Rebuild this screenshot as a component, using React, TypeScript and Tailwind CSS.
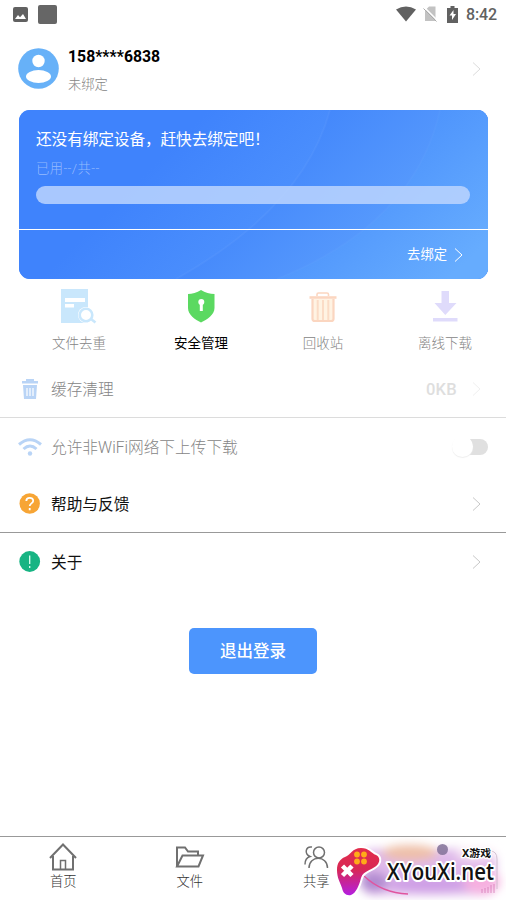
import type { ReactNode } from "react";

function Chevron({ className }: { className: string }) {
  return (
    <svg width="10" height="16" viewBox="0 0 10 16" fill="none" stroke="currentColor" className={className}>
      <path d="M1 1.5 8 8 1 14.5" />
    </svg>
  );
}

function StatusBar() {
  return (
    <div className="flex h-7 items-center justify-between pl-[13px] pr-[9px] text-[#616161]">
      <div className="flex items-center gap-[10px]">
        <svg width="15" height="15" viewBox="0 0 15 15">
          <rect width="15" height="15" rx="2" fill="currentColor" />
          <path d="M2 12 5 8l2 2.3L10 7l3 5z" fill="#fff" />
        </svg>
        <div className="h-[19px] w-[19px] rounded-[2px] bg-[#666]"></div>
      </div>
      <div className="flex items-center">
        <svg width="20" height="16" viewBox="0 0 20 16" className="mr-[7px]">
          <path d="M0 3.5Q10-2.5 20 3.5L10 15.5z" fill="currentColor" />
        </svg>
        <svg width="15" height="16" viewBox="0 0 15 16" className="mr-[9px]">
          <path d="M6 .5h6.5V15H2V4.5z" fill="#c2c2c2" />
          <path d="M2 2 14.5 14.5" stroke="#fff" strokeWidth="1.5" />
          <path d="M.5 2.5 13.5 15.5" stroke="#aaa" />
        </svg>
        <svg width="11" height="17" viewBox="0 0 11 17" className="mr-[8px]">
          <path d="M3.5 0h4v2H11v15H0V2h3.5z" fill="currentColor" />
          <path d="M6.5 4 2.5 9.5H5V14l4-6H6.5z" fill="#fff" />
        </svg>
        <span className="pt-px font-[Roboto,sans-serif] text-[16px] font-medium leading-none tracking-[-0.1px]">8:42</span>
      </div>
    </div>
  );
}

function Profile() {
  return (
    <div className="flex h-[82px] items-center pl-[18px] pr-[24px]">
      <svg width="41" height="41" viewBox="0 0 41 41" className="mr-[9px] -mt-[2px]">
        <circle cx="20.5" cy="20.5" r="20.3" fill="#67b1f8" />
        <circle cx="20.5" cy="13" r="6.2" fill="#fff" />
        <ellipse cx="20.5" cy="28.5" rx="12.5" ry="6.5" fill="#fff" />
      </svg>
      <div className="flex-1 pt-[2px]">
        <div className="h-[26px] text-[15.8px] font-bold leading-[23px] text-black">158****6838</div>
        <div className="mt-[3px] h-[22px] text-[13.3px] font-light leading-[22px] text-[#858585]">未绑定</div>
      </div>
      <Chevron className="text-[#dcdcdc]" />
    </div>
  );
}

function DeviceCard() {
  return (
    <div className="relative mx-[18px] ml-[19px] h-[169px] overflow-hidden rounded-[11px] bg-[#4083fb] text-white">
      {/* 卡片背景的弧形光带 */}
      <svg className="absolute inset-0" width="469" height="169" viewBox="0 0 469 169">
        <defs>
          <linearGradient id="band1" gradientUnits="userSpaceOnUse" x1="130" y1="60" x2="240" y2="170">
            <stop offset="0" stopColor="#3f83fc" />
            <stop offset="1" stopColor="#4f93fd" />
          </linearGradient>
          <linearGradient id="band2" gradientUnits="userSpaceOnUse" x1="250" y1="20" x2="370" y2="140">
            <stop offset="0" stopColor="#4084fb" />
            <stop offset="1" stopColor="#5a9dfd" />
          </linearGradient>
          <linearGradient id="band3" gradientUnits="userSpaceOnUse" x1="340" y1="30" x2="450" y2="150">
            <stop offset="0" stopColor="#498ffc" />
            <stop offset="1" stopColor="#66acfe" />
          </linearGradient>
        </defs>
        <path d="M0 0H469V169H0z" fill="url(#band1)" />
        <path d="M311 0Q285 97 157 169H469V0z" fill="url(#band2)" />
        <path d="M311 0Q285 97 157 169" fill="none" stroke="#fff" strokeOpacity=".035" strokeWidth="2" />
        <path d="M421 0Q396 113 258 169H469V0z" fill="url(#band3)" />
        <path d="M421 0Q396 113 258 169" fill="none" stroke="#fff" strokeOpacity=".02" strokeWidth="2" />
      </svg>
      <div className="relative flex h-full flex-col">
        <div className="h-[119px] px-[17px] pt-[18px]">
          <div className="h-[24px] text-[15.7px] leading-[24px] tracking-[-0.12px]">还没有绑定设备，赶快去绑定吧！</div>
          <div className="mt-[7px] h-5 text-[13.3px] font-light leading-5 tracking-[0.4px] text-white/45">已用--/共--</div>
          <div className="mt-[7px] mr-px h-[18px] rounded-full bg-[#bcd5fe]/85"></div>
        </div>
        <div className="flex flex-1 items-center justify-end border-t border-white pr-[24px]">
          <span className="pt-px text-[13.3px]">去绑定</span>
          <Chevron className="ml-[7px]" />
        </div>
      </div>
    </div>
  );
}

function Feature({ label, active, children }: { label: string; active?: boolean; children: ReactNode }) {
  return (
    <div className="flex flex-col items-center pt-[9px]">
      <svg width="36" height="36" viewBox="0 0 36 36">{children}</svg>
      <span className={active ? "mt-[9px] text-[13.5px] leading-5 text-black" : "mt-[9px] text-[13.5px] font-light leading-5 text-[#858585]"}>
        {label}
      </span>
    </div>
  );
}

function Features() {
  return (
    <div className="grid h-[82px] grid-cols-4 pl-[18px]">
      <Feature label="文件去重">
        <path d="M0 1h27v34H0z" fill="#c9e7fc" />
        <path d="M4 10h20v4H4zM4 16h9v3.5H4z" fill="#fff" />
        <circle cx="25" cy="27" r="8" fill="#fff" />
        <circle cx="25" cy="27" r="6.3" fill="#fff" stroke="#c9e7fc" strokeWidth="2.6" />
        <path d="m30 31 4.500 3.500" stroke="#c9e7fc" strokeWidth="2.600" />
      </Feature>
      <Feature label="安全管理" active>
        <path d="M18 2C14 4.500 9 6 5 6v14c0 7 7 11.500 13 14.500C24 31.500 31.500 27 31.500 20V6C27 6 22 4.500 18 2z" fill="#5bd961" />
        <circle cx="18.300" cy="14" r="3" fill="#fff" />
        <path d="M16.800 15h3v8h-3z" fill="#fff" />
      </Feature>
      <Feature label="回收站">
        <g fill="none" stroke="#fbd6c0" strokeWidth="1.600">
          <path d="M12 8V6.500Q12 5 13.500 5H22q1.500 0 1.500 1.500V8" />
          <path d="M4.500 9.500h27" strokeWidth="2.600" />
          <path d="M7.500 11v20q0 2 2.500 2h16q2.500 0 2.500-2V11" fill="#fff3e3" strokeWidth="2.200" />
          <path d="M12.700 12v20M18 12v20M23.300 12v20" strokeWidth="2" stroke="#fbdcc6" />
        </g>
      </Feature>
      <Feature label="离线下载">
        <path d="M14.500 3h7.500v12H29.500L18.300 27 7.500 15h7zM6 30h24.500v3.500H6z" fill="#dfdbfb" />
      </Feature>
    </div>
  );
}

type RowProps = { icon: ReactNode; label: string; muted?: boolean; children: ReactNode };

function Row({ icon, label, muted, children }: RowProps) {
  return (
    <div className="flex h-[57px] items-center pl-[18px] pr-[24px]">
      <div className="flex w-[33px] items-center">{icon}</div>
      <span className={muted ? "flex-1 pt-[2px] text-[15.7px] font-light text-[#858585]" : "flex-1 pt-[2px] text-[15.7px] text-[#111]"}>{label}</span>
      {children}
    </div>
  );
}

function Settings() {
  return (
    <div>
      <div className="-mt-px border-b border-[#dcdcdc]">
        <Row
          muted
          label="缓存清理"
          icon={
            <svg width="24" height="24" viewBox="0 0 24 24" fill="#b9d4f6">
              <path d="M8 2h8v2h4v2.500H4V4h4zM5 8h14l-1 14H6z" />
              <path d="M9 11v8M12 11v8M15 11v8" stroke="#fff" strokeWidth="1.200" />
            </svg>
          }
        >
          <span className="mr-[15px] pt-[4px] font-[Roboto,sans-serif] text-[16.5px] font-medium tracking-[0.3px] text-[#dedede]">0KB</span>
          <Chevron className="text-[#f0f0f0]" />
        </Row>
      </div>
      <Row
        muted
        label="允许非WiFi网络下上传下载"
        icon={
          <svg width="24" height="20" viewBox="0 0 24 20" fill="none" stroke="#b9d4f6" strokeWidth="3">
            <path d="M1 7.500Q12-2 23 7.500M5.500 12Q12 6 18.500 12" />
            <circle cx="12" cy="16.500" r="2.200" fill="#b9d4f6" stroke="none" />
          </svg>
        }
      >
        <div className="-mr-[6px] flex h-4 w-[32px] items-center rounded-full bg-[#e0e0e0]">
          <div className="-ml-1 h-[21px] w-[21px] rounded-full bg-white shadow-[0_1px_1px_#eee]"></div>
        </div>
      </Row>
      <div className="border-b border-[#999]">
        <Row
          label="帮助与反馈"
          icon={
            <svg width="23" height="23" viewBox="0 0 23 23" fill="none" stroke="#fff" strokeWidth="1.800">
              <circle cx="11.700" cy="11.500" r="10.200" fill="#f7a535" stroke="none" />
              <path d="M8.300 9C8.300 4.800 15.200 4.800 15.200 8.800c0 2.500-3.500 2.700-3.500 5.200M11.700 16v2.200" />
            </svg>
          }
        >
          <Chevron className="text-[#c8c8c8]" />
        </Row>
      </div>
      <Row
        label="关于"
        icon={
          <svg width="23" height="23" viewBox="0 0 23 23" stroke="#d9fff0" strokeWidth="1.300">
            <circle cx="11.700" cy="11.500" r="10.400" fill="#17b483" stroke="none" />
            <path d="M11.700 5.500v8.500M11.700 16v2" />
          </svg>
        }
      >
        <Chevron className="text-[#c8c8c8]" />
      </Row>
    </div>
  );
}

function Tab({ label, children }: { label: string; children: ReactNode }) {
  return (
    <div className="flex flex-col items-center pt-[5px]">
      <svg width="30" height="30" viewBox="0 0 30 30" fill="none" stroke="#707070" strokeWidth="2">{children}</svg>
      <span className="text-[13.3px] font-light leading-[19px] text-[#333]">{label}</span>
    </div>
  );
}

// 右下角的站点水印
function Watermark() {
  return (
    <svg className="absolute bottom-0 right-0" width="176" height="64" viewBox="330 836 176 64">
      <defs>
        <filter id="haze" x="-20%" y="-40%" width="140%" height="180%">
          <feGaussianBlur stdDeviation="5" />
        </filter>
        <linearGradient id="pad" x1="0" y1="0" x2="0" y2="1">
          <stop offset="0" stopColor="#e22d4c" />
          <stop offset=".45" stopColor="#d82855" />
          <stop offset="1" stopColor="#b41fe0" />
        </linearGradient>
      </defs>
      <g filter="url(#haze)">
        <rect x="362" y="849" width="134" height="46" rx="10" fill="#dfb9ea" />
        <ellipse cx="410" cy="853" rx="28" ry="8" fill="#eebfa8" />
        <ellipse cx="374" cy="882" rx="14" ry="10" fill="#b08ad0" />
        <ellipse cx="430" cy="884" rx="42" ry="9" fill="#cfa0e6" />
        <ellipse cx="482" cy="882" rx="18" ry="12" fill="#f6b0e0" />
        <ellipse cx="476" cy="854" rx="20" ry="6" fill="#fbeaf5" />
      </g>
      <circle cx="442.500" cy="849.500" r="5.500" fill="#817098" opacity=".85" />
      <path d="M364 876Q382 893 408 894" fill="none" stroke="#e0559f" strokeWidth="1.500" />
      <path d="M482 893v-4M485 893v-5M488 893v-6M491 893v-8M494 893v-9" stroke="#d67ab5" strokeWidth=".800" />
      <path d="M490 851q7 0 7 8v30" fill="none" stroke="#c9b8c9" strokeWidth=".800" />
      <path
        d="M345 857C351 855 352 848 361 848C369 848 371 853 376 855C380 857 380 861 378 864C374 870 363 870 361 878C359 886 356 893 351 895C346 896 343 893 342 888C340 882 337 878 337 870C337 863 340 859 345 857Z"
        fill="url(#pad)"
        stroke="#fff"
        strokeWidth="4"
        paintOrder="stroke"
      />
      <g fill="#ffab18">
        <circle cx="357" cy="854.500" r="2.900" />
        <circle cx="364" cy="854.500" r="2.900" />
        <circle cx="357" cy="861.500" r="2.900" />
        <circle cx="364" cy="861.500" r="2.900" />
      </g>
      <path d="m342.500 866 9.500 9.500M352 866l-9.500 9.500" stroke="#fff" strokeWidth="4.500" />
      <g stroke="#fff" paintOrder="stroke" strokeLinejoin="round" fill="#111">
        <text x="387" y="880" textLength="107" lengthAdjust="spacingAndGlyphs" strokeWidth="4" className="font-['Open_Sans','Noto_Sans',sans-serif] text-[23.500px] font-semibold">XYouXi.net</text>
        <text x="462" y="856.500" textLength="29" lengthAdjust="spacingAndGlyphs" strokeWidth="2.500" className="font-['Noto_Sans','Noto_Sans_CJK_SC',sans-serif] text-[10.500px] font-bold">X游戏</text>
      </g>
    </svg>
  );
}

function BottomNav() {
  return (
    <nav className="relative mt-auto h-16 border-t border-[#999]">
      <div className="grid grid-cols-4">
        <Tab label="首页">
          <path d="M2 16 15 2.500 28 16M5 14v13.500h20V14" />
          <path d="M12.500 27v-8.500h5V27" strokeWidth="1.500" />
        </Tab>
        <Tab label="文件">
          <path d="M2 24V5.500h8l3 4h10V13M2 24.500 7.500 13.500H28L23.500 24.500z" />
        </Tab>
        <Tab label="共享">
          <g strokeWidth="1.500">
            <circle cx="18" cy="10.500" r="5.500" />
            <path d="M8 26c0-13 18.500-13 18.500 0M11 5C4.500 4 3 12 9 14.500c-3.500 1-5 4-5 8" />
          </g>
        </Tab>
      </div>
      <Watermark />
    </nav>
  );
}

export default function App() {
  return (
    <div className="flex h-[900px] w-[506px] flex-col overflow-hidden bg-white font-[Roboto,'Noto_Sans_CJK_SC',sans-serif]">
      <StatusBar />
      <Profile />
      <DeviceCard />
      <Features />
      <Settings />
      <button className="mt-[38px] ml-[189px] h-[46px] w-[128px] rounded-[5px] bg-[#4c95fd] pt-[3px] text-[16.5px] font-medium text-white">退出登录</button>
      <BottomNav />
    </div>
  );
}
